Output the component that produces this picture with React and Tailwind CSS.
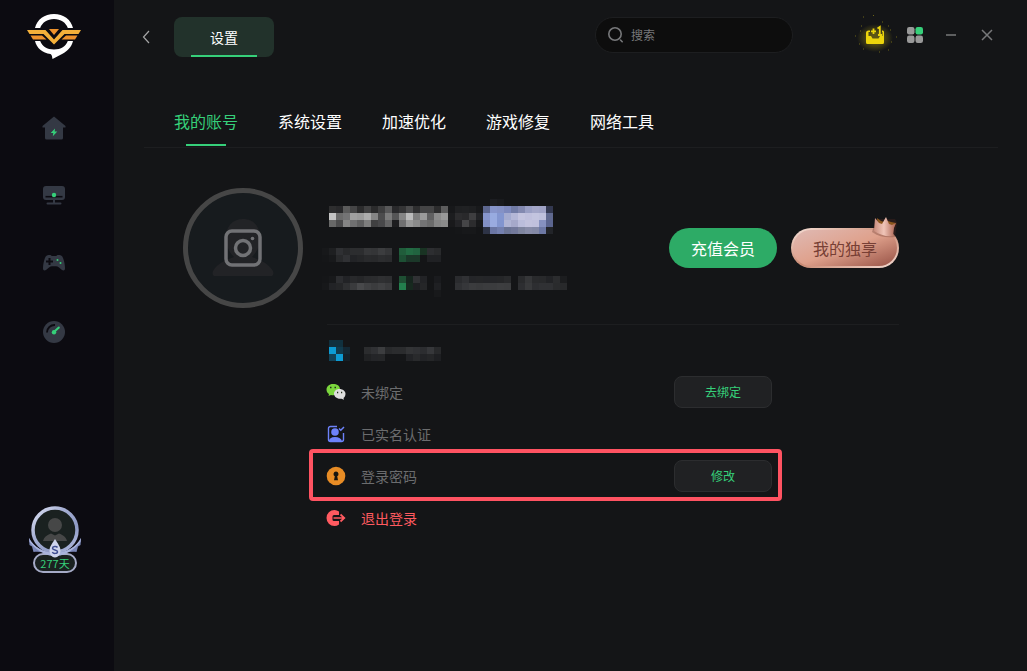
import React, { useState } from 'react';

const tabs = ['我的账号', '系统设置', '加速优化', '游戏修复', '网络工具'];

// Masked account data, [column, row, colours...] on a 7px grid
const profileCells = [
  [24, 0, ['#1c1d21', '#191a1d']],
  [1, 1, ['#2e2e2f', '#29292b', '#5b5b5b', '#454546', '#2b2b2c', '#404041', '#2b2b2c', '#3e3e3f', '#585859', '#29292b', '#343435', '#4b4b4c', '#2e2e2f', '#444445', '#444445', '#2c2c2d', '#5c5c5d', '#17181a', '#1f2022', '#202123', '#1e1f21', '#18191b', '#5d678f', '#8795cb', '#8592c6', '#7d89bd', '#717ba5', '#8389b0', '#9a9fc4', '#a3a6c8', '#a0a3c6', '#333850']],
  [1, 2, ['#c4c4c4', '#6b6b6b', '#747475', '#a0a0a0', '#9b9b9b', '#acacac', '#858585', '#4c4c4d', '#7b7b7b', '#555556', '#858585', '#bbbbbb', '#7e7e7e', '#9b9b9b', '#606061', '#8b8b8b', '#999999', '#1c1d1f', '#2c2c2e', '#29292b', '#3e3e40', '#222326', '#8796cc', '#98abe0', '#8396d0', '#a4abd0', '#b4b7d7', '#c4c4df', '#c0c0dd', '#c3c4df', '#bfc1dd', '#60698f']],
  [1, 3, ['#686868', '#4c4c4d', '#858585', '#707071', '#606061', '#7e7e7e', '#404041', '#48484a', '#646465', '#1d1d1f', '#707071', '#999999', '#8b8b8b', '#747475', '#6b6b6b', '#858585', '#8b8b8b', '#19191b', '#232326', '#454547', '#2c2c2e', '#18191b', '#8290c5', '#9aabe0', '#8295cf', '#b0b4d4', '#a6a9ca', '#bbbddb', '#c2c2dd', '#c0c0dc', '#8691bf', '#5b658f']],
  [19, 4, ['#151618', '#17181a', '#17181a', '#141517', '#2d3346', '#6b76a4', '#7480af', '#6c7596', '#73799b', '#7f859f', '#888ca8', '#8489a6', '#6d78a4', '#222429']],
  [0, 7, ['#17181a', '#1e1f21', '#2f3033', '#28292b', '#2c2d2f', '#2c2d2f', '#363739', '#343537', '#3c3d3f', '#353638', '#141517', '#205d3b', '#226b43', '#216440', '#193323', '#2d2e31', '#292a2c']],
  [0, 8, ['#151618', '#18191b', '#28292b', '#303134', '#222326', '#252628', '#292a2c', '#28292b', '#2c2d2f', '#2a2b2d', '#141517', '#1d5034', '#1b3829', '#1b3829', '#141517', '#202124', '#202124']],
  [0, 11, ['#151618', '#18191b', '#2c2d30', '#222326', '#28292b', '#252628', '#2a2b2d', '#2b2c2e', '#2f3032', '#2d2e30', '#141517', '#1e4f33', '#16251e', '#303134', '#222326', '#141517', '#1a1b1e', '#141517', '#141517', '#2a2b2e', '#303134', '#242528', '#252628', '#242528', '#242528', '#252628', '#292a2c', '#141517', '#292a2c', '#353638', '#292a2c', '#28292b', '#222326', '#2b2c2e', '#1c1d1f']],
  [0, 12, ['#17181a', '#222326', '#252628', '#2f3032', '#3a3b3d', '#48494b', '#404143', '#3b3c3e', '#404143', '#3a3b3d', '#141517', '#237f4d', '#17291f', '#1e1f22', '#252628', '#141517', '#1f2023', '#141517', '#141517', '#303134', '#36373a', '#3b3c3e', '#393a3c', '#3b3c3e', '#3b3c3e', '#3d3e40', '#3c3d3f', '#141517', '#2d2e31', '#38393b', '#2d2e31', '#303134', '#303134', '#2a2b2d', '#28292b']],
  [16, 13, ['#18191b']],
];

const phoneIconCells = [
  [0, 0, ['#10303e', '#10303e', '#141517']],
  [0, 1, ['#0d9bd3', '#113a4c', '#132733']],
  [0, 2, ['#124358', '#0d9bd3', '#142028']],
];

const phoneCells = [
  [0, 1, ['#2b2c2e', '#303134', '#3c3d3f', '#28292b', '#2b2c2e', '#2b2c2e', '#333436', '#303134', '#2c2d30', '#36373a', '#28292b']],
  [0, 2, ['#202123', '#242528', '#252628', '#151618', '#151618', '#151618', '#222326', '#292a2c', '#222326', '#252628', '#1e1f22']],
];

const Mosaic = ({ cells, width, height, x = 0, label }) => (
  <svg
    width={width}
    height={height}
    viewBox={`${x} 0 ${width} ${height}`}
    className="block shrink-0 overflow-visible"
    shapeRendering="crispEdges"
    role="img"
    aria-label={label}
  >
    {cells.map(([col, row, colors]) =>
      colors.map((color, i) => (
        <rect key={`${row}-${col + i}`} x={(col + i) * 7} y={row * 7} width="7" height="7" fill={color} />
      ))
    )}
  </svg>
);

const Logo = () => (
  <svg width="54" height="46" viewBox="0 0 54 46" aria-hidden="true">
    <path d="M8 15C10 6.500 17.500 1 27 1s17 5.500 19 14h-5.200C39 9.800 33.800 6 27 6S15 9.800 13.200 15z" fill="#fff" />
    <path d="M8 28h5.200C15 33 20 36.500 27 36.500S39 33 40.800 28H46c-1.500 6-5.500 10-10 12.500-3.500 2-7 3.500-10.500 5.500-.5-2-.2-4-2-5C15.500 40 9.500 35 8 28z" fill="#fff" />
    <path d="M0 17h18.500l8.500 9.500 8.500-9.500H54l-2.500 4H37.500L27 31.500 16.500 21h-14z" fill="#f4b03a" />
    <path d="M3.500 22.500H15l4.500 4H6zM50.500 22.500H39l-4.500 4H48zM22 16h10l-5 6z" fill="#ee922c" />
  </svg>
);

const HomeIcon = () => (
  <svg width="24" height="24" viewBox="0 0 24 24" aria-hidden="true">
    <path d="M12 .5 23.500 10v1.500H21V22a1.500 1.500 0 0 1-1.500 1.500h-15A1.500 1.500 0 0 1 3 22V11.500H.5V10z" fill="#343944" />
    <path d="M13 12.500 8.700 17h2.600l-.5 3.200 4.500-4.700h-2.600z" fill="#36d07a" />
  </svg>
);

const MonitorIcon = () => (
  <svg width="24" height="24" viewBox="0 0 24 24" aria-hidden="true">
    <rect x="1" y="2" width="22" height="14" rx="3" fill="#343944" />
    <path d="M3.500 12.700h17" stroke="#0c0b11" strokeWidth="1.600" />
    <path d="M12 16v3M5.500 19.500h13" stroke="#343944" strokeWidth="2" strokeLinecap="round" />
    <circle cx="12" cy="11" r="2.200" fill="#36d07a" />
  </svg>
);

const GamepadIcon = () => (
  <svg width="24" height="24" viewBox="0 0 24 24" aria-hidden="true">
    <path d="M6.500 3h2l1.300 1h4.400l1.300-1h2C20 3 21 5 22 9c.8 3 1 5.500 1 7.500S21.500 19 20 18c-2-1.500-4-3.700-6-3.700h-4C8 14.300 6 16.500 4 18c-1.500 1-3 .5-3-1.500S1.200 12 2 9c1-4 2-6 4.500-6z" fill="#343944" />
    <path d="M7.500 6v7M4 9.500h7" stroke="#0c0b11" strokeWidth="2" />
    <circle cx="15.500" cy="8" r="1" fill="#36d07a" />
    <circle cx="18.500" cy="11" r="1" fill="#36d07a" />
  </svg>
);

const GaugeIcon = () => (
  <svg width="24" height="24" viewBox="0 0 24 24" aria-hidden="true">
    <circle cx="12" cy="12" r="11" fill="#343944" />
    <path d="M5 12.500A7.500 7.500 0 0 1 13 5" fill="none" stroke="#0c0b11" strokeWidth="1.800" />
    <circle cx="12" cy="12.300" r="2.200" fill="#36d07a" />
    <path d="m12 12 4.800-4.500" stroke="#36d07a" strokeWidth="2" strokeLinecap="round" />
  </svg>
);

const navItems = [
  { label: '首页', Icon: HomeIcon },
  { label: '主机', Icon: MonitorIcon },
  { label: '游戏', Icon: GamepadIcon },
  { label: '测速', Icon: GaugeIcon },
];

const MemberBadge = () => (
  <button type="button" className="mt-auto ml-0.5 flex flex-col items-center">
    <svg width="54" height="56" viewBox="0 0 54 56" className="relative z-10 -mb-2" aria-hidden="true">
      <defs>
        <linearGradient id="ring" x1="0" y1="0" x2="1" y2="1">
          <stop offset="0" stopColor="#dfe3f5" />
          <stop offset=".35" stopColor="#a7b0d4" />
          <stop offset=".7" stopColor="#8f9bc6" />
          <stop offset="1" stopColor="#b9c1e2" />
        </linearGradient>
      </defs>
      <circle cx="27" cy="25" r="22" fill="#1a2120" stroke="url(#ring)" strokeWidth="3.500" />
      <circle cx="27" cy="20" r="7" fill="#464747" />
      <path d="M15 36c1-4 4-6 8-7.500l4 2 4-2c4 1.500 7 3.500 8 7.500z" fill="#464747" />
      <path d="M1 33c5 9 13 14 26 15 13-1 21-6 26-15l-.5 7-2.500 1.500-1.500 5.500C42 46 36 48 32 50H22c-4-2-10-4-16.500-3L4 41.500 1.500 40z" fill="#7b87b8" />
      <path d="M1 33c5 9 13 14 26 15 13-1 21-6 26-15l-.5 4C47 44 38 50 29 51h-4C16 50 7 44 1.500 37z" fill="#a9b3dc" />
      <path d="M27 34c3 5 5.500 7.500 5.500 11.500S30 52.500 27 52.500s-5.500-3-5.500-7S24 39 27 34z" fill="#ced4ec" />
      <path d="M29.500 42.500c-1-1.500-5-1.200-5 .8 0 2.400 5 1 5 3.400 0 2-4 2.300-5.200.5" fill="none" stroke="#414f91" strokeWidth="1.500" />
    </svg>
    <span className="flex h-5 w-11 items-center justify-center rounded-full border-2 border-[#a5aac6] bg-[#1a2120] text-[11px] leading-none text-[#36d07a]">
      277天
    </span>
  </button>
);

const Sidebar = () => (
  <aside className="flex w-[114px] shrink-0 flex-col items-center bg-[#0c0b11] pt-[13px] pr-[6px] pb-[98px]">
    <Logo />
    <nav className="mt-[57px] flex flex-col gap-11">
      {navItems.map(({ label, Icon }) => (
        <a key={label} href="#" aria-label={label}>
          <Icon />
        </a>
      ))}
    </nav>
    <MemberBadge />
  </aside>
);

const GiftIcon = () => (
  <svg width="40" height="40" viewBox="0 0 40 40" className="overflow-visible" aria-hidden="true">
    <defs>
      <radialGradient id="glow">
        <stop offset=".3" stopColor="#e6d010" stopOpacity=".35" />
        <stop offset="1" stopColor="#e6d010" stopOpacity="0" />
      </radialGradient>
    </defs>
    <ellipse cx="20" cy="23" rx="18" ry="14" fill="url(#glow)" />
    <path d="M8 2h1M18 .5h1M33 11h1M5 16h1M0 21h1M36 27h1M41 22h1M8 34h1M33 35h1M27 7h1M24 37h1M6 11h1M4 29h1M35 15h1" stroke="#a79a18" strokeOpacity=".6" />
    <path d="M13.500 15.500H15V17h-1.500v4H16l1.500 2.500h6L25 21h2.500v-4H27v-1.500h.5A1.500 1.500 0 0 1 29 17v10.500a1.500 1.500 0 0 1-1.500 1.500h-15a1.500 1.500 0 0 1-1.500-1.500V18a2.500 2.500 0 0 1 2.500-2.500z" fill="#ecd50c" />
    <path d="M18.500 13.500v5.500M16 16.300h5" stroke="#ecd50c" strokeWidth="1.800" />
    <path d="m22.500 13.500 2.300-1.500v8M23 20h4" fill="none" stroke="#ecd50c" strokeWidth="1.800" />
  </svg>
);

const Header = () => (
  <header className="flex items-start justify-between pt-[17px]">
    <div className="flex h-10 items-center">
      <button type="button" aria-label="返回" className="-ml-2 flex w-5 justify-center">
        <svg width="8" height="14" viewBox="0 0 8 14" fill="none" stroke="#a5a5a6" strokeWidth="1.200">
          <path d="M7 1 1.500 7 7 13" />
        </svg>
      </button>
      <button type="button" className="relative ml-[18px] h-10 w-[100px] rounded-lg bg-[#22322b] text-sm text-white">
        设置
        <span className="absolute bottom-0 left-[17px] h-[2px] w-[66px] bg-[#36d07a]" />
      </button>
    </div>

    <div className="flex h-9 items-center">
      <label className="mr-[62px] flex h-9 w-[198px] items-center gap-[7px] rounded-full border border-[#1d1e20] bg-[#0d0d0d] px-3">
        <svg width="16" height="16" viewBox="0 0 16 16" fill="none" stroke="#77787a" strokeWidth="1.600" className="shrink-0" aria-hidden="true">
          <circle cx="7" cy="7" r="6.200" />
          <path d="m12.500 13 1.700 1.700" strokeLinecap="round" />
        </svg>
        <input type="text" aria-label="搜索" placeholder="搜索" className="w-full min-w-0 bg-transparent text-xs text-white outline-none placeholder:text-[#77787a]" />
      </label>
      <button type="button" aria-label="礼包">
        <GiftIcon />
      </button>
      <button type="button" aria-label="应用" className="ml-3">
        <svg width="16" height="16" viewBox="0 0 16 16" fill="#999">
          <rect width="7.500" height="7.500" rx="2.200" />
          <rect x="8.500" width="7.500" height="7.500" rx="2.200" fill="#36d07a" />
          <rect y="8.500" width="7.500" height="7.500" rx="2.200" />
          <rect x="8.500" y="8.500" width="7.500" height="7.500" rx="2.200" />
        </svg>
      </button>
      <button type="button" aria-label="最小化" className="ml-[22px]">
        <svg width="12" height="12" viewBox="0 0 12 12" stroke="#77787a" strokeWidth="1.500">
          <path d="M1 6h10" />
        </svg>
      </button>
      <button type="button" aria-label="关闭" className="mr-[5px] ml-6">
        <svg width="12" height="12" viewBox="0 0 12 12" stroke="#77787a" strokeWidth="1.500">
          <path d="m1 1 10 10M11 1 1 11" />
        </svg>
      </button>
    </div>
  </header>
);

const Avatar = () => (
  <button type="button" aria-label="更换头像" className="flex size-[120px] shrink-0 items-center justify-center rounded-full border-[5px] border-[#464646] bg-[#171b1e]">
    <svg width="62" height="60" viewBox="0 0 62 60" fill="none">
      <path d="M31 1c11 0 17 8 17 18s-4 16-8 20c9 3 17 7 21 14 1 3 0 5-2 5H3c-2 0-3-2-2-5 4-7 12-11 21-14-4-4-8-10-8-20S20 1 31 1z" fill="#222326" />
      <rect x="14" y="13" width="34" height="34" rx="6" stroke="#717275" strokeWidth="3.500" />
      <circle cx="31" cy="30" r="7.500" stroke="#717275" strokeWidth="3.500" />
      <circle cx="40.500" cy="20.500" r="1.800" fill="#717275" />
    </svg>
  </button>
);

const Crown = () => (
  <svg width="28" height="24" viewBox="0 0 28 24" className="absolute -top-3 right-0" aria-hidden="true">
    <defs>
      <linearGradient id="crown" x1="0" y1="0" x2="1" y2="0">
        <stop offset="0" stopColor="#c98c7c" />
        <stop offset=".45" stopColor="#f0c5b8" />
        <stop offset="1" stopColor="#a9604e" />
      </linearGradient>
    </defs>
    <path d="M5 3h19l2 4-2 14C16 22 8 21 1 16z" fill="#5d2b20" opacity=".3" />
    <path d="m6 2 4 3 3 1 4-1 3 1 5 1-2 4-8 1-8-2z" fill="#8b571d" />
    <path d="m4 2 4 5 3 1 4-7 3 7 3 1 4-2-2 5-1 8c-6 1-13-1-19-5z" fill="url(#crown)" />
  </svg>
);

const WechatIcon = () => (
  <svg width="20" height="18" viewBox="0 0 20 18">
    <path d="M7 1C3 1 .5 3.500.5 6.500c0 2 1 3.500 2.500 4.500L2.500 13 5 12c5 1 9-1.500 9-5.500S11 1 7 1z" fill="#7bd63d" />
    <path d="M13.500 6C10 6 8 8.300 8 10.800s2.500 5 6 5h1.500l2.500 1-.5-1.800c1.300-1 2-2.200 2-4.200 0-2.500-2.500-4.800-6-4.800z" fill="#dedede" />
    <path d="M4 4.500h1.500M8.500 4.500H10M11 9.500h1.200M15 9.500h1.200" stroke="#24301d" strokeWidth="1.300" />
  </svg>
);

const VerifiedIcon = () => (
  <svg width="18" height="18" viewBox="0 0 18 18">
    <path d="M10 1.500H3.500a2 2 0 0 0-2 2v11a2 2 0 0 0 2 2h11a2 2 0 0 0 2-2V8" fill="none" stroke="#6d82fa" strokeWidth="1.400" />
    <path d="m12 3.500 1.800 1.800L17 2" fill="none" stroke="#6d82fa" strokeWidth="1.500" />
    <circle cx="8" cy="7" r="3.800" fill="#6d82fa" />
    <path d="M2 16.500c0-3 2-4.500 6-4.500s6.500 1.500 7 4.500z" fill="#6d82fa" />
  </svg>
);

const LockIcon = () => (
  <svg width="20" height="20" viewBox="0 0 20 20">
    <circle cx="10" cy="10" r="9.300" fill="#e88c25" />
    <path d="M10 5.500a2.500 2.500 0 0 0-1.200 4.700L8 14.300h4l-.8-4.100A2.500 2.500 0 0 0 10 5.500z" fill="#17140f" />
  </svg>
);

const LogoutIcon = () => (
  <svg width="20" height="18" viewBox="0 0 20 18">
    <path d="M13 2.500V6H8a1.500 1.500 0 0 0-1.500 1.500v3A1.500 1.500 0 0 0 8 12h5v3.500c-1.500 1-3 1.500-4.500 1.500a8 8 0 0 1 0-16c1.500 0 3 .5 4.500 1.500z" fill="#ff5a60" />
    <path d="M7.500 9H18M14.500 5.500 18.300 9l-3.800 3.500" fill="none" stroke="#ff5a60" strokeWidth="1.700" />
  </svg>
);

const AccountRow = ({ icon, children, action, highlighted }) => (
  <li className="relative flex h-[42px] items-center gap-4">
    {highlighted && (
      <span className="pointer-events-none absolute -top-1.5 -right-2.5 -bottom-1 -left-[18px] rounded-sm border-4 border-[#ff5362]" />
    )}
    <span className="flex w-[18px] shrink-0 justify-center [&>svg]:shrink-0">{icon}</span>
    <span className="flex-1 text-sm text-[#6b6c6e]">{children}</span>
    {action && (
      <button type="button" className="h-8 w-[98px] rounded-lg border border-[#2c2d2f] bg-[#202123] text-xs text-[#36d07a]">
        {action}
      </button>
    )}
  </li>
);

const AccountPanel = () => (
  <section className="flex gap-6 pt-10 pr-[99px] pl-[39px]">
    <Avatar />
    <div className="min-w-0 flex-1">
      <div className="flex h-[120px] items-center justify-between">
        <Mosaic cells={profileCells} width={240} height={98} x={5} label="账号信息" />
        <div className="flex gap-[14px]">
          <button type="button" className="h-10 w-[108px] rounded-full bg-[#2dab66] text-base text-white">
            充值会员
          </button>
          <button
            type="button"
            className="relative h-10 w-[108px] rounded-full bg-linear-to-br from-[#f7e4dc] via-[#c98a73] to-[#f5ded6] p-[2px] text-base text-[#773f35]"
          >
            <span className="flex h-full items-center justify-center rounded-full bg-linear-160 from-[#dfb9b3] via-[#dfa18c] to-[#985347]">
              我的独享
            </span>
            <Crown />
          </button>
        </div>
      </div>

      <ul className="mt-4 border-t border-[#1d1e20] pt-1 pr-[127px]">
        <AccountRow icon={<Mosaic cells={phoneIconCells} width={14} height={21} label="手机" />}>
          <Mosaic cells={phoneCells} width={84} height={21} x={-3} label="手机号" />
        </AccountRow>
        <AccountRow icon={<WechatIcon />} action="去绑定">未绑定</AccountRow>
        <AccountRow icon={<VerifiedIcon />}>已实名认证</AccountRow>
        <AccountRow icon={<LockIcon />} action="修改" highlighted>登录密码</AccountRow>
        <AccountRow icon={<LogoutIcon />}>
          <button type="button" className="text-[#ff5a60]">退出登录</button>
        </AccountRow>
      </ul>
    </div>
  </section>
);

const App = () => {
  const [activeTab, setActiveTab] = useState(tabs[0]);

  return (
    <div className="flex min-h-screen bg-[#141517] font-['Noto_Sans_CJK_SC',sans-serif]">
      <Sidebar />
      <main className="min-w-0 flex-1 pr-[29px] pl-[30px]">
        <Header />

        {/* Tabs */}
        <nav className="mt-[39px] flex gap-10 border-b border-[#1d1e20] pb-px pl-[30px]">
          {tabs.map((tab) => (
            <button
              key={tab}
              type="button"
              onClick={() => setActiveTab(tab)}
              className={`relative h-[50px] text-base ${activeTab === tab ? 'text-[#36d07a]' : 'text-white'}`}
            >
              {tab}
              {activeTab === tab && <span className="absolute bottom-0 left-3 h-[2px] w-10 bg-[#36d07a]" />}
            </button>
          ))}
        </nav>

        {activeTab === tabs[0] && <AccountPanel />}
      </main>
    </div>
  );
};

export default App;
